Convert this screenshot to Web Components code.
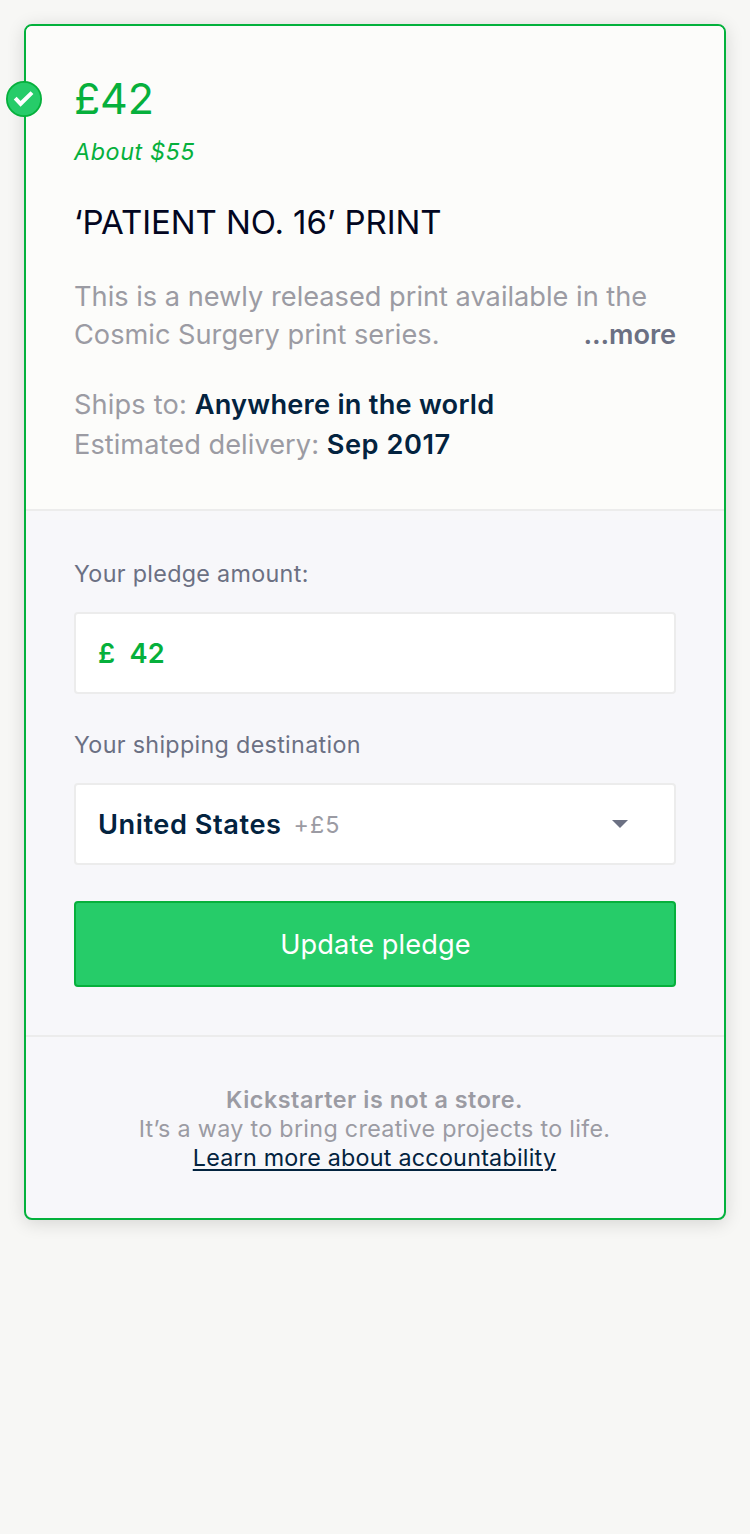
<!DOCTYPE html>
<html lang="en">
<head>
<meta charset="utf-8">
<title>Update pledge</title>
<style>
html,body{margin:0;min-height:100%}
body{background:#f7f7f5;font-family:Inter,"Liberation Sans",sans-serif;color:#9b9ba3;min-height:1534px}
</style>
</head>
<body>
<pledge-card>
  <reward-summary slot="summary" amount="£42" converted="About $55" heading="‘PATIENT NO. 16’ PRINT">
    <span slot="line1">This is a newly released print available in the</span>
    <span slot="line2">Cosmic Surgery print series.</span>
  </reward-summary>
  <pledge-form slot="form"></pledge-form>
  <store-notice slot="notice"></store-notice>
</pledge-card>
<script>
class Base extends HTMLElement{
  constructor(){super();this.attachShadow({mode:'open'}).innerHTML=this.render();}
  a(n){return this.getAttribute(n)||'';}
}
customElements.define('check-badge',class extends Base{render(){return `
<style>:host{display:block;width:36px;height:36px}svg{display:block}</style>
<svg width="36" height="36" viewBox="0 0 36 36"><circle cx="18" cy="18" r="17.1" fill="#26cc69" stroke="#06b03c" stroke-width="1.8"/><path d="M9.2 17.2L14.6 22.8L26 11.6" fill="none" stroke="#fff" stroke-width="4"/></svg>`}});
customElements.define('pledge-card',class extends Base{render(){return `
<style>
:host{display:block;padding:24px}
.card{position:relative;border:2px solid #03b13c;border-radius:8px;background:#f7f7fa;box-shadow:0 3px 18px rgba(0,0,0,.14)}
check-badge{position:absolute;left:-20px;top:55px}
</style>
<div class="card"><slot name="summary"></slot><slot name="form"></slot><slot name="notice"></slot><check-badge></check-badge></div>`}});
customElements.define('reward-summary',class extends Base{render(){return `
<style>
:host{display:block;padding:46px 48px 44px;background:#fcfcfa;border-bottom:2px solid #ececec;border-radius:6px 6px 0 0;white-space:nowrap}
.amount{font-size:43px;line-height:52px;color:#06b03c;letter-spacing:-.2px}
.conv{font-size:23.3px;line-height:30px;font-style:italic;color:#06b03c;margin-top:13px;letter-spacing:.6px}
h2{margin:34px 0 0;font-weight:400;font-size:33px;line-height:42px;color:#020621;letter-spacing:-.08px}
.desc{margin-top:35px;font-size:27.2px;line-height:38px}
.row{display:flex;justify-content:space-between}
.more{font-weight:600;color:#6b7083;letter-spacing:-.1px}
.facts{margin-top:31px;font-size:27.2px;line-height:40px}
.ships{letter-spacing:.15px}
.est{letter-spacing:.05px}
b{font-weight:600;color:#03233f;letter-spacing:.24px}
.date{letter-spacing:.55px}
</style>
<div class="amount"><span>${this.a('amount')}</span></div>
<div class="conv"><span>${this.a('converted')}</span></div>
<h2><span>${this.a('heading')}</span></h2>
<div class="desc"><div><slot name="line1"></slot></div><div class="row"><slot name="line2"></slot><span class="more">...more</span></div></div>
<div class="facts"><div><span class="ships">Ships to: </span><b>Anywhere in the world</b></div><div><span class="est">Estimated delivery: </span><b class="date">Sep 2017</b></div></div>`}});
customElements.define('form-field',class extends Base{render(){return `
<style>
:host{display:block;margin-bottom:36px}
label{display:block;font-size:23.3px;line-height:30px;color:#6b7083;margin-bottom:23px;letter-spacing:.32px}
.box{box-sizing:border-box;height:82px;border:2px solid #ececec;border-radius:4px;background:#fff;padding:2px 22px 0;display:flex;align-items:center;font-size:27.2px;font-weight:600;line-height:40px}
</style>
<label><span>${this.a('label')}</span></label><div class="box"><slot></slot></div>`}});
customElements.define('pledge-form',class extends Base{render(){return `
<style>
:host{display:block;padding:48px;border-bottom:2px solid #ececec}
.cur,.num{color:#06b03c}.cur{width:31.4px}.num{letter-spacing:.25px}
.country{color:#03233f;letter-spacing:.55px}.extra{margin:0 0 0 12px;font-size:23.3px;font-weight:400;letter-spacing:1.1px}
.arrow{margin:-2px 24px 0 auto}
button{box-sizing:border-box;display:block;width:100%;height:86px;border:2px solid #06b03c;border-radius:4px;background:#26cc69;color:#fff;font:400 27.2px/40px Inter,"Liberation Sans",sans-serif;padding:2px 0 0 1px;letter-spacing:.1px}
</style>
<form-field label="Your pledge amount:"><span class="cur">£</span><span class="num">42</span></form-field>
<form-field label="Your shipping destination"><span class="country">United States</span><span class="extra">+£5</span><svg class="arrow" width="16" height="8" viewBox="0 0 16 8"><path d="M0 0H16L8 8Z" fill="#6b7083"/></svg></form-field>
<button><span>Update pledge</span></button>`}});
customElements.define('store-notice',class extends Base{render(){return `
<style>
:host{display:block;padding:48px 48.5px 46px 47.5px;text-align:center;font-size:23.3px;line-height:29px;letter-spacing:.31px}
b{font-weight:600;letter-spacing:.55px}a{color:#03233f;letter-spacing:.24px;text-decoration:underline;text-decoration-thickness:2px;text-underline-offset:3px}
</style>
<div><b>Kickstarter is not a store.</b></div><div><span>It’s a way to bring creative projects to life.</span></div><div><a>Learn more about accountability</a></div>`}});
</script>
</body>
</html>
